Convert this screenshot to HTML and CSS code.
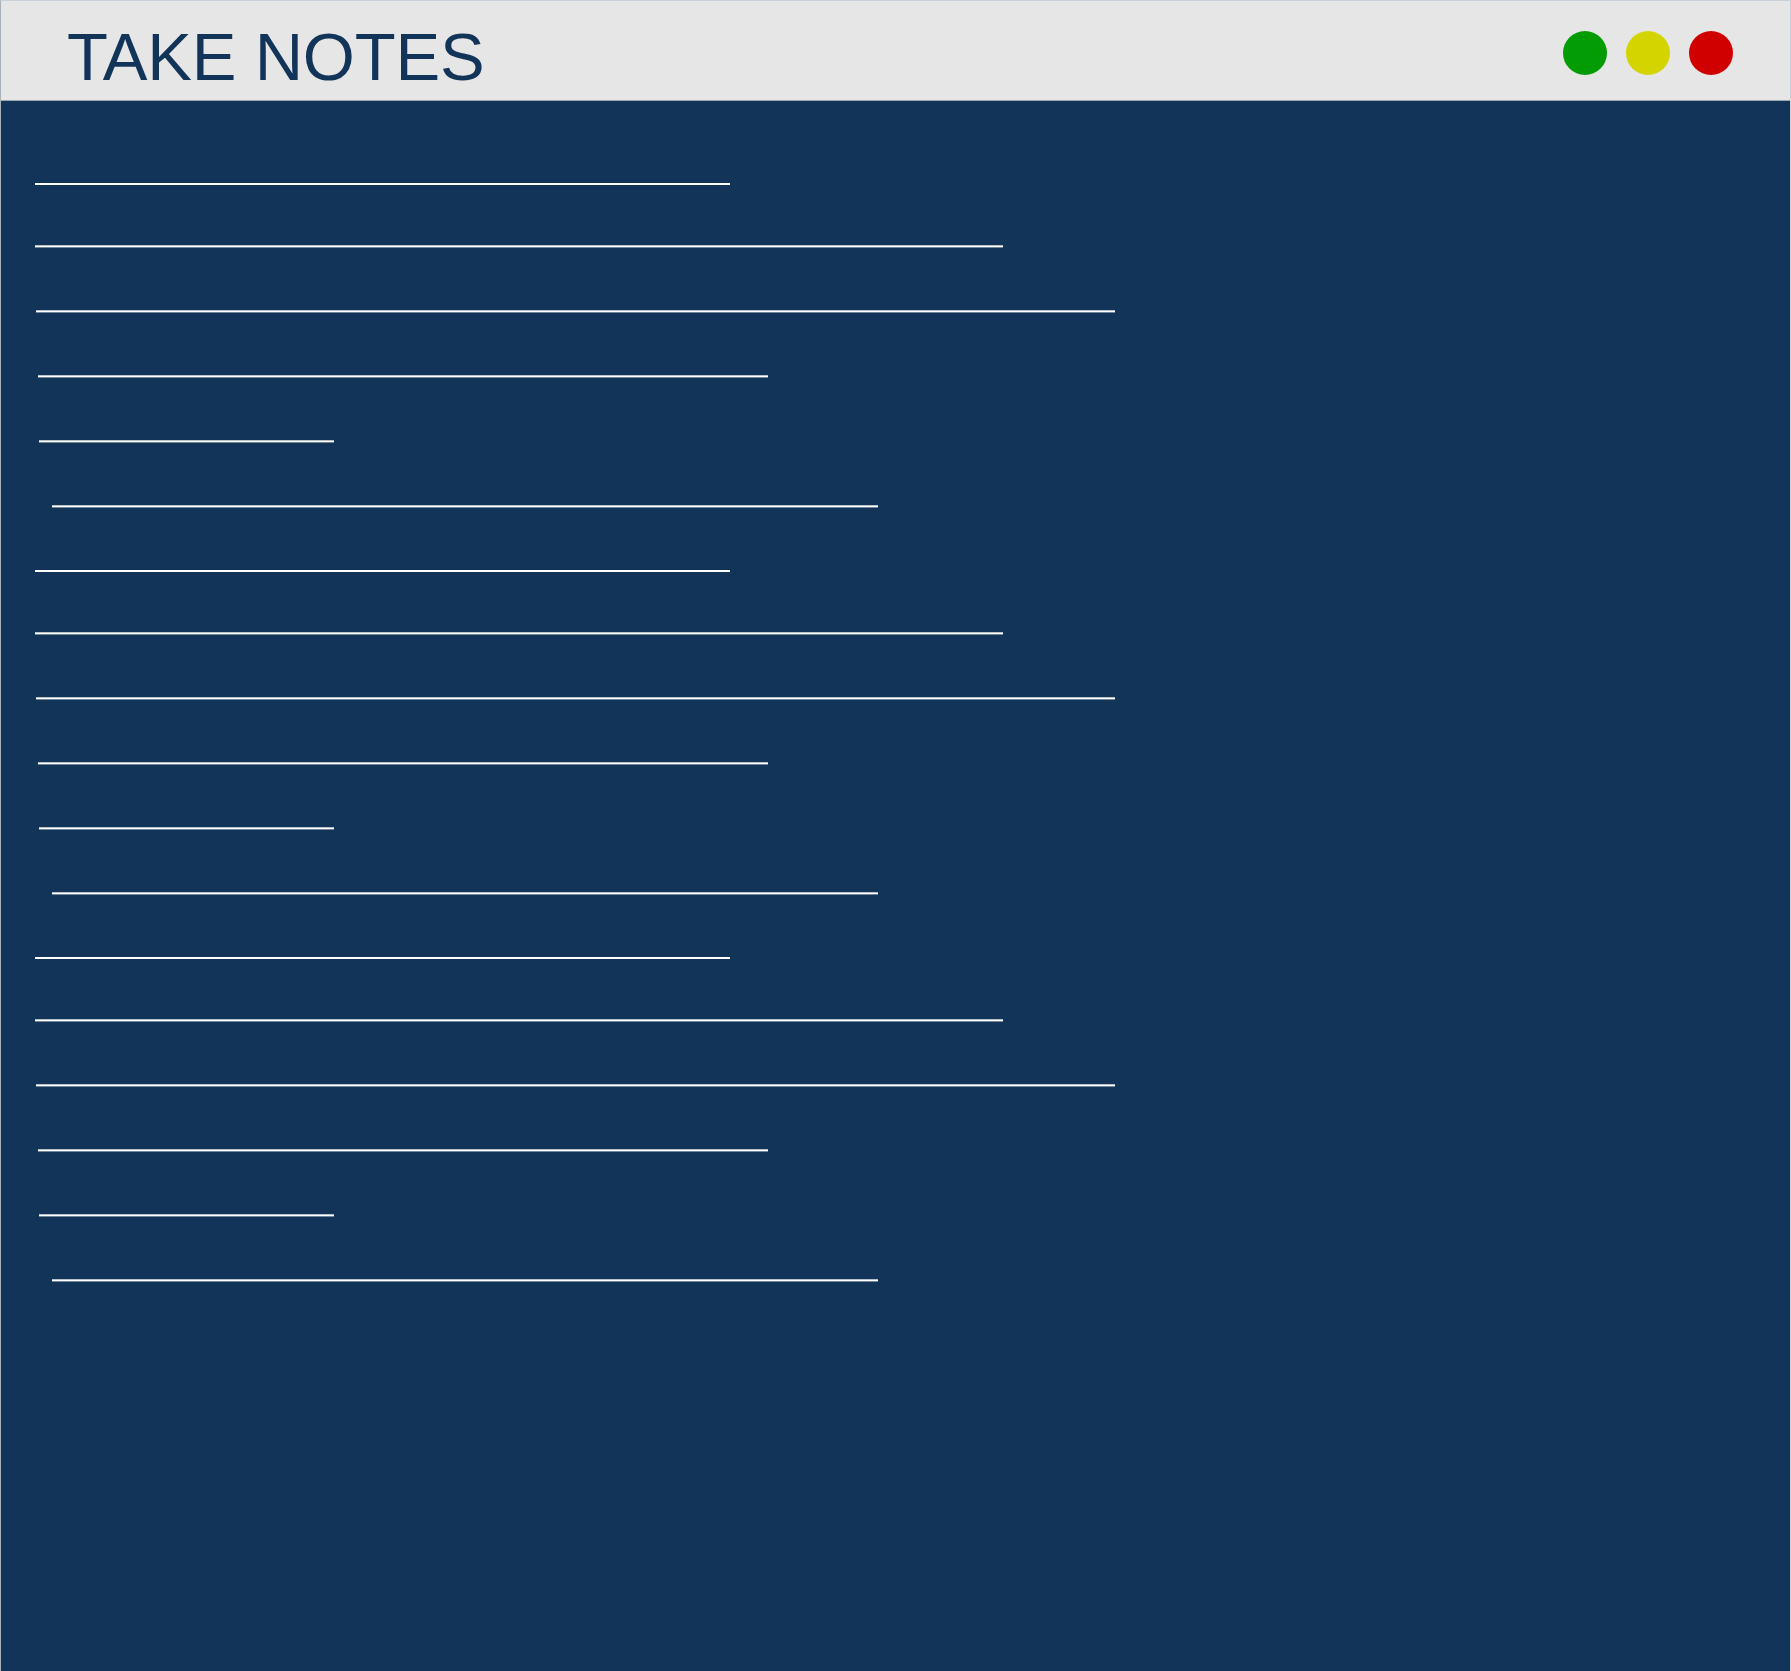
FILE: index.html
```html
<!DOCTYPE html>
<html lang="en">
<head>
<meta charset="utf-8">
<title>Take Notes</title>
<link rel="stylesheet" href="styles.css">
</head>
<body>
<div class="app">
  <header class="header">
    <h1 class="title">TAKE NOTES</h1>
    <div class="lights">
      <span class="dot dot-green"></span>
      <span class="dot dot-yellow"></span>
      <span class="dot dot-red"></span>
    </div>
  </header>
  <main class="sheet">
    <div class="group">
      <div class="rule r1"></div>
      <div class="rule r2"></div>
      <div class="rule r3"></div>
      <div class="rule r4"></div>
      <div class="rule r5"></div>
      <div class="rule r6"></div>
    </div>
    <div class="group">
      <div class="rule r1"></div>
      <div class="rule r2"></div>
      <div class="rule r3"></div>
      <div class="rule r4"></div>
      <div class="rule r5"></div>
      <div class="rule r6"></div>
    </div>
    <div class="group">
      <div class="rule r1"></div>
      <div class="rule r2"></div>
      <div class="rule r3"></div>
      <div class="rule r4"></div>
      <div class="rule r5"></div>
      <div class="rule r6"></div>
    </div>
  </main>
</div>
</body>
</html>
```
FILE: styles.css
```css
html, body {
  margin: 0;
  padding: 0;
  background: #133459;
}

.app {
  box-sizing: border-box;
  width: 1791px;
  height: 1671px;
  border: 1px solid #c9d0d8;
  border-bottom: none;
  border-left-color: #a9b0b8;
  background: #133459;
  display: flex;
  flex-direction: column;
}

.header {
  box-sizing: border-box;
  height: 100px;
  flex: none;
  background: #e6e6e6;
  border-bottom: 1px solid #9ba6b2;
  display: flex;
  justify-content: space-between;
  align-items: flex-start;
  padding: 0 57px 0 66px;
}

.title {
  margin: 22px 0 0 0;
  font-family: "Liberation Sans", Arial, sans-serif;
  font-weight: normal;
  font-size: 67px;
  line-height: 67px;
  color: #133459;
  letter-spacing: -0.2px;
}

.lights {
  display: flex;
  gap: 19px;
  margin-top: 30px;
}

.dot {
  display: block;
  width: 44px;
  height: 44px;
  border-radius: 50%;
}

.dot-green { background: #049c04; }
.dot-yellow { background: #d4d400; }
.dot-red { background: #d00000; }

.sheet {
  flex: 1;
  display: flex;
  flex-direction: column;
  gap: 63px;
  padding-top: 82px;
}

.group {
  display: flex;
  flex-direction: column;
  gap: 64px;
}

.rule {
  height: 1px;
  background: #ffffff;
  box-shadow: 0 -1px 0 rgba(255, 255, 255, 0.7), 0 1px 0 rgba(255, 255, 255, 0.4);
}

.rule.r1 {
  height: 2px;
  box-shadow: none;
}

.rule.r2 {
  margin-top: -3px;
}

.r1 { margin-left: 34px; width: 695px; }
.r2 { margin-left: 34px; width: 968px; }
.r3 { margin-left: 35px; width: 1079px; }
.r4 { margin-left: 37px; width: 730px; }
.r5 { margin-left: 38px; width: 295px; }
.r6 { margin-left: 51px; width: 826px; }
```
